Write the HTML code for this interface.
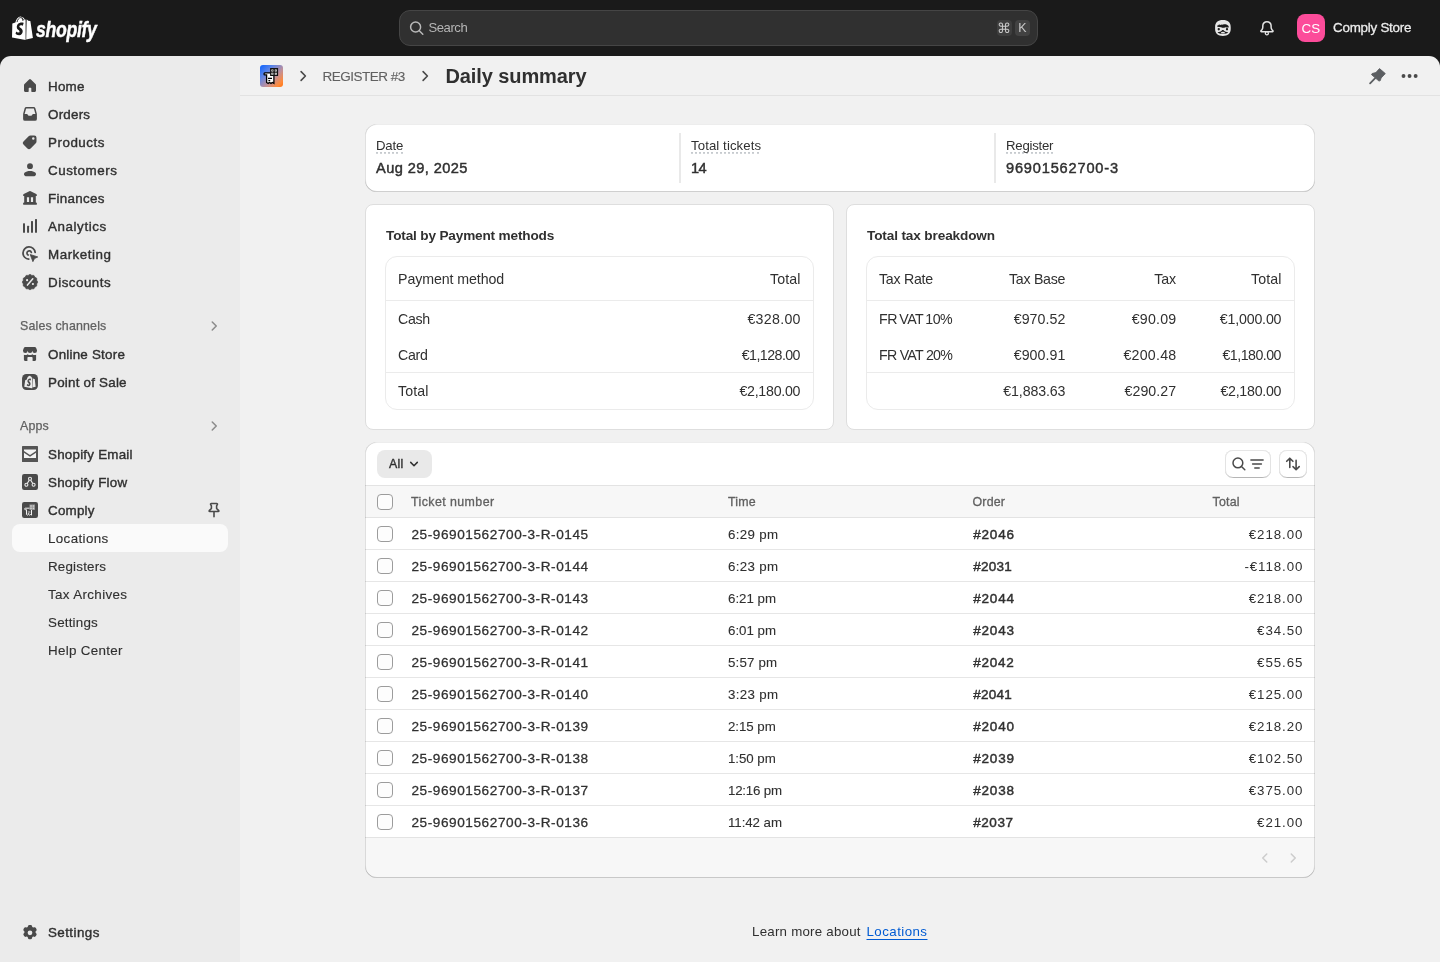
<!DOCTYPE html>
<html lang="en">
<head>
<meta charset="utf-8">
<title>Daily summary · Comply</title>
<style>
*{box-sizing:border-box;margin:0;padding:0}
html,body{width:1440px;height:962px;overflow:hidden}
body{background:#1a1a1a;font-family:"Liberation Sans",Arial,sans-serif;font-size:13px;color:#303030;position:relative;-webkit-font-smoothing:antialiased}
#root{position:absolute;left:0;top:0;width:1440px;height:962px;will-change:transform;background:#1a1a1a}
.abs{position:absolute}
.t{position:absolute;white-space:nowrap;line-height:20px;height:20px}
svg{display:block;position:absolute;overflow:visible}
/* top bar */
#topbar{position:absolute;left:0;top:0;width:1440px;height:56px;background:#1a1a1a}
#search{position:absolute;left:399px;top:10px;width:639.400px;height:36px;border-radius:11px;background:#303030;border:1px solid #454545}
.kbd{position:absolute;top:20px;width:15.400px;height:15.600px;border-radius:4px;background:#424242;color:#c8c8c8;font-size:12.400px;line-height:16px;text-align:center}
#avatar{position:absolute;left:1297px;top:14px;width:28px;height:28px;border-radius:8px;background:#fc4c9a;color:#fff;font-size:13.4px;line-height:29px;text-align:center;letter-spacing:.1px}
/* frame */
#side{position:absolute;left:0;top:56px;width:240px;height:906px;background:#ebebeb;border-top-left-radius:11px}
#main{position:absolute;left:240px;top:56px;width:1200px;height:906px;background:#f1f1f1;border-top-right-radius:11px}
#apphead{position:absolute;left:0;top:0;width:1200px;height:40px;border-bottom:1px solid #e2e2e2}
/* nav */
.nv{margin-top:1px;position:absolute;left:48px;white-space:nowrap;line-height:20px;height:20px;font-size:13.4px;color:#303030;-webkit-text-stroke:.38px #303030;letter-spacing:.22px}
.sub{margin-top:1px;position:absolute;left:48px;white-space:nowrap;line-height:20px;height:20px;font-size:13.4px;color:#303030;letter-spacing:.2px;-webkit-text-stroke:.12px #303030}
.sec{position:absolute;left:20px;white-space:nowrap;line-height:20px;height:20px;font-size:12.400px;color:#616161;letter-spacing:.17px;-webkit-text-stroke:.25px #616161}
.ic{position:absolute;left:20px;width:20px;height:20px}
.ic svg{left:0;top:0;width:20px;height:20px;fill:#4a4a4a}
#sel{position:absolute;left:12px;top:468px;width:216px;height:28px;border-radius:8px;background:#fafafa}
/* cards */
.card{position:absolute;background:#fff;border-radius:12px}
.card::after{content:"";position:absolute;left:0;top:0;right:0;bottom:0;border-radius:12px;pointer-events:none;z-index:5;box-shadow:inset 0 1px 0 0 rgba(0,0,0,.07),inset 1px 0 0 0 rgba(0,0,0,.12),inset -1px 0 0 0 rgba(0,0,0,.12),inset 0 -1px 0 0 rgba(0,0,0,.19)}
.scard{position:absolute;background:#fff;border-radius:8px;border:1px solid #dedede}
.inner{position:absolute;border:1px solid #ebebeb;border-radius:12px;background:#fff}
.hl{position:absolute;height:1px;background:#ebebeb}
.vl{position:absolute;width:1px;background:#e3e3e3}

.lb{position:absolute;white-space:nowrap;line-height:20px;height:20px;font-size:13.2px;color:#303030;letter-spacing:-.05px}
.lb u{text-decoration:none;padding-bottom:1px;background-image:repeating-linear-gradient(90deg,#c6cace 0,#c6cace 2px,transparent 2px,transparent 4.100px);background-size:100% 1.800px;background-repeat:no-repeat;background-position:0 100%}
.vb{position:absolute;white-space:nowrap;line-height:20px;height:20px;font-size:14.6px;color:#303030;-webkit-text-stroke:.45px #303030;letter-spacing:.2px}
.h2{position:absolute;white-space:nowrap;line-height:20px;height:20px;font-size:13.6px;font-weight:bold;color:#303030;letter-spacing:-.1px}
.c{position:absolute;white-space:nowrap;line-height:20px;height:20px;font-size:14.2px;color:#303030;letter-spacing:.12px}
.r{text-align:right}

.btnall{position:absolute;left:12px;top:8px;width:55px;height:28px;border-radius:8px;background:#e9e9e9}
.tbtn{position:absolute;top:8px;height:28px;border-radius:8px;background:#fff;box-shadow:inset 0 1px 0 0 #e6e6e6,inset 1px 0 0 0 #e3e3e3,inset -1px 0 0 0 #e3e3e3,inset 0 -1px 0 0 #b5b5b5}
#thead{position:absolute;left:0;top:43px;width:950px;height:33px;background:#f7f7f7;border-top:1px solid #e3e3e3;border-bottom:1px solid #e3e3e3}
#tfoot{position:absolute;left:0;top:396px;width:950px;height:40px;background:#f7f7f7;border-radius:0 0 12px 12px}
.rl{position:absolute;left:0;width:950px;height:1px;background:#e6e6e6}
.cb{position:absolute;left:12px;width:16px;height:16px;border-radius:4px;border:1px solid #9c9c9c;background:#fdfdfd}
.th{position:absolute;white-space:nowrap;line-height:16px;height:16px;font-size:12.4px;color:#616161;-webkit-text-stroke:.3px #616161;letter-spacing:.2px}
.tk{position:absolute;left:46.400px;white-space:nowrap;line-height:20px;height:20px;font-size:13.600px;color:#303030;-webkit-text-stroke:.28px #303030;letter-spacing:.58px}
.tm{position:absolute;left:363px;white-space:nowrap;line-height:20px;height:20px;font-size:13.3px;color:#303030;letter-spacing:.42px;-webkit-text-stroke:.1px #303030}
.od{position:absolute;left:608.200px;white-space:nowrap;line-height:20px;height:20px;font-size:13.5px;color:#303030;-webkit-text-stroke:.45px #303030;letter-spacing:.76px}
.tt{position:absolute;right:11.700px;text-align:right;white-space:nowrap;line-height:20px;height:20px;font-size:13.3px;color:#303030;letter-spacing:.92px}
</style>
</head>
<body>
<div id="root">
<div id="topbar">
  <svg id="bag" style="left:12px;top:15.5px;width:21px;height:24px" viewBox="0 0 21 24"><path fill="#fff" d="M14.2 23.6 20.9 22.1 18.4 5.2c-.02-.13-.13-.2-.23-.21l-1.9-.14-1.4-1.38c-.06-.06-.14-.08-.22-.08L14.2 23.6ZM13.5 3.5l-.75.23c-.45-1.3-1.24-2.48-2.63-2.48h-.12C9.6.73 9.1.5 8.68.5 5.44.5 3.9 4.55 3.4 6.6l-2.27.7c-.7.22-.72.24-.82.9L0 21.4l13.6 2.5V3.48c-.04 0-.08.01-.1.02Z"/><path fill="#1a1a1a" transform="translate(7.900 12.900) scale(1.320 1.340) translate(-8 -12.800)" d="M10.9 8.3l-.72 2.1s-.63-.33-1.4-.33c-1.13 0-1.18.7-1.18.88 0 .97 2.53 1.34 2.53 3.6 0 1.78-1.13 2.93-2.66 2.93-1.83 0-2.76-1.14-2.76-1.14l.49-1.62s.96.83 1.77.83c.53 0 .75-.42.75-.72 0-1.26-2.08-1.32-2.08-3.4 0-1.75 1.26-3.44 3.79-3.44.98 0 1.46.28 1.46.28Z"/><path fill="none" stroke="#1a1a1a" stroke-width=".9" d="M5 6.1C5.6 3.7 6.9 1.6 8.7 1.6c1.5 0 2.4 1.3 2.9 2.6M9.9 1.9c.9 1.2.9 2.6.9 3"/></svg>
  <div class="t" id="wordmark" style="left:36px;top:14.500px;height:30px;line-height:30px;font-size:21.300px;font-weight:bold;font-style:italic;color:#fff;-webkit-text-stroke:.45px #fff;letter-spacing:-.4px;transform:scaleX(.83);transform-origin:0 50%">shopify</div>
  <div id="search"></div>
  <svg style="left:407px;top:18px;width:20px;height:20px" viewBox="0 0 20 20"><path fill="none" stroke="#b9b9b9" stroke-width="1.5" stroke-linecap="round" d="M13.6 9a5 5 0 1 1-10 0 5 5 0 0 1 10 0ZM12.3 12.7l3.5 3.500"/></svg>
  <div class="t" id="tsearch" style="left:428.4px;top:18px;font-size:13.1px;color:#b5b5b5;letter-spacing:-.42px">Search</div>
  <div class="kbd" style="left:996.800px;font-size:13.500px;line-height:17.400px;background:#3e3e3e">⌘</div>
  <div class="kbd" style="left:1014.700px">K</div>
  <svg id="sidekick" style="left:1213px;top:18px;width:20px;height:20px" viewBox="0 0 20 20"><path fill="#e6e6e6" transform="translate(0 .4) scale(1 .962)" d="M9.900 1.750c5 0 7.800 2.600 7.800 7.150v2.300c0 4.300-3.100 7-7.800 7s-7.800-2.700-7.800-7V8.900c0-4.550 2.800-7.150 7.800-7.150Z"/><path fill="#1a1a1a" d="M4.150 8.700c.150-.900.600-1.750 1.050-2.300l.350 1.150c.300-.550.700-.950 1.150-1.200l.200.950c.500-.550 1.150-.900 1.800-1.100l-.100.800c1.700-1 4.700-1 6.700.700.400.500.550 1.100.450 1.700-1.400.250-2.500.100-3.450-.100-1.100.700-2.900.800-4.150 0-1.300-.300-2.600-.500-4-.600Z"/><circle cx="5.750" cy="11.250" r="1.150" fill="#1a1a1a"/><circle cx="14" cy="11.250" r="1.150" fill="#1a1a1a"/><path fill="#1a1a1a" d="M4.500 14.200c1.800-.250 3.500-.800 4.350-1.750.500-.550 1.500-.550 2 0 .850.950 2.550 1.500 4.350 1.750-.800 1.250-2.700 1.700-5.350 1.700s-4.550-.450-5.350-1.700Z"/><ellipse cx="9.950" cy="14.650" rx="2" ry=".95" fill="#e6e6e6"/></svg>
  <svg id="bell" style="left:1257px;top:18px;width:20px;height:20px" viewBox="0 0 20 20"><circle cx="9.850" cy="15.250" r="1.550" fill="none" stroke="#e3e3e3" stroke-width="1.300"/><path fill="#1a1a1a" stroke="#e3e3e3" stroke-width="1.500" stroke-linejoin="round" d="M9.950 3.650c-2.400 0-4.150 1.850-4.150 4.150v1.500c0 .900-.300 1.700-.900 2.400l-.900 1c-.350.400-.050 1.050.450 1.050h11c.500 0 .800-.650.450-1.050l-.900-1c-.600-.700-.900-1.500-.900-2.400V7.800c0-2.300-1.750-4.150-4.150-4.150Z"/></svg>
  <div id="avatar">CS</div>
  <div class="t" id="tstore" style="left:1333px;top:18px;font-size:13.4px;color:#ececec;-webkit-text-stroke:.28px #ececec;letter-spacing:-.24px">Comply Store</div>
</div>
<div id="side">
  <div id="sel"></div>
  <div class="ic" style="top:20px"><svg viewBox="0 0 20 20"><path d="M9.100 3.450a1.300 1.300 0 0 1 1.800 0l4.600 4.450c.320.310.500.730.500 1.170v5.430c0 .830-.670 1.500-1.500 1.500h-2.550a.650.650 0 0 1-.650-.650v-3a.600.600 0 0 0-.600-.600h-1.400a.600.600 0 0 0-.600.600v3a.650.650 0 0 1-.650.650h-2.550c-.830 0-1.500-.670-1.500-1.500v-5.430c0-.440.180-.860.500-1.170l4.600-4.450Z"/></svg></div><div class="nv" style="top:20px">Home</div>
  <div class="ic" style="top:48px"><svg viewBox="0 0 20 20"><path fill-rule="evenodd" d="M6.450 2.900a1.900 1.900 0 0 0-1.830 1.400l-1.420 5.200c-.070.250-.100.500-.100.760v4.640a1.900 1.900 0 0 0 1.900 1.900h10a1.900 1.900 0 0 0 1.900-1.900v-4.640c0-.260-.030-.510-.100-.760l-1.420-5.200a1.900 1.900 0 0 0-1.830-1.400h-7.100Zm-.380 1.800a.400.400 0 0 1 .380-.300h7.100c.180 0 .340.120.380.300l1.470 5.400h-2.300a.900.900 0 0 0-.750.400l-.480.720a1.300 1.300 0 0 1-1.080.580h-1.580a1.300 1.300 0 0 1-1.080-.580l-.480-.720a.900.900 0 0 0-.750-.400h-2.300l1.470-5.400Z"/></svg></div><div class="nv" style="top:48px">Orders</div>
  <div class="ic" style="top:76px"><svg viewBox="0 0 20 20"><path fill-rule="evenodd" d="M10.400 3.500a2.500 2.500 0 0 0-1.770.730l-5.150 5.150a2.250 2.250 0 0 0 0 3.180l3.960 3.960a2.250 2.250 0 0 0 3.180 0l5.150-5.150a2.500 2.500 0 0 0 .730-1.770v-3.850a2.250 2.250 0 0 0-2.250-2.250h-3.850Zm2.900 4.350a1.250 1.250 0 1 0 0-2.500 1.250 1.250 0 0 0 0 2.500Z"/></svg></div><div class="nv" style="top:76px;letter-spacing:0.52px">Products</div>
  <div class="ic" style="top:104px"><svg viewBox="0 0 20 20"><path d="M10 3.200a2.950 2.950 0 1 0 0 5.900 2.950 2.950 0 0 0 0-5.900Z"/><path d="M10 10.900c-2.300 0-4.100.600-5.200 1.500-.800.650-1 1.700-.600 2.550.400.850 1.250 1.350 2.200 1.350h7.200c.950 0 1.800-.500 2.200-1.350.400-.850.200-1.900-.600-2.550-1.100-.900-2.900-1.500-5.200-1.500Z"/></svg></div><div class="nv" style="top:104px;letter-spacing:0.52px">Customers</div>
  <div class="ic" style="top:132px"><svg viewBox="0 0 20 20"><path fill-rule="evenodd" d="M9.350 3.150a1.400 1.400 0 0 1 1.300 0l5.600 2.950c.400.200.650.620.650 1.070 0 .520-.420.930-.930.930h-.170v6.300h.200c.500 0 .900.400.900.900v.600c0 .500-.400.900-.900.900h-12c-.500 0-.900-.400-.900-.900v-.600c0-.500.400-.900.900-.900h.200v-6.300h-.170a.930.930 0 0 1-.930-.930c0-.450.250-.870.650-1.070l5.600-2.950Zm-2.450 6.050v4.700h2.200v-4.700h-2.200Zm4 0v4.700h2.200v-4.700h-2.200Z"/></svg></div><div class="nv" style="top:132px;letter-spacing:0.31px">Finances</div>
  <div class="ic" style="top:160px"><svg viewBox="0 0 20 20"><rect x="3" y="7.150" width="2" height="9.600" rx=".5"/><rect x="7.050" y="9.800" width="2" height="6.950" rx=".5"/><rect x="11" y="5" width="2" height="11.750" rx=".5"/><rect x="15" y="3" width="2" height="13.750" rx=".5"/></svg></div><div class="nv" style="top:160px;letter-spacing:0.58px">Analytics</div>
  <div class="ic" style="top:188px"><svg viewBox="0 0 20 20"><path fill="none" stroke="#4a4a4a" stroke-width="1.750" stroke-linecap="round" d="M15.150 8.400a6.100 6.100 0 1 0-6.400 6.750"/><path fill="none" stroke="#4a4a4a" stroke-width="1.700" stroke-linecap="round" d="M11.350 8.400a2.250 2.250 0 1 0-3.250 2.650"/><path stroke="#4a4a4a" stroke-width=".8" stroke-linejoin="round" d="M10.200 10.500l7.600 2.450-3.300 1.600-1.600 3.100-2.700-7.150Z"/></svg></div><div class="nv" style="top:188px;letter-spacing:0.52px">Marketing</div>
  <div class="ic" style="top:216px"><svg viewBox="0 0 20 20"><path stroke="#4a4a4a" stroke-width=".7" stroke-linejoin="round" d="M10.00 2.35L11.80 3.39L13.88 3.39L14.91 5.19L16.71 6.22L16.71 8.30L17.75 10.10L16.71 11.90L16.71 13.97L14.91 15.01L13.88 16.81L11.80 16.81L10.00 17.85L8.20 16.81L6.13 16.81L5.09 15.01L3.29 13.98L3.29 11.90L2.25 10.10L3.29 8.30L3.29 6.22L5.09 5.19L6.12 3.39L8.20 3.39Z"/><path stroke="#ebebeb" stroke-width="1.500" stroke-linecap="round" d="M7.450 13.100 12.800 6.800"/><circle cx="7.100" cy="8.200" r="1.100" fill="#ebebeb"/><circle cx="12.900" cy="12" r="1.100" fill="#ebebeb"/></svg></div><div class="nv" style="top:216px;letter-spacing:0.49px">Discounts</div>
  <div class="sec" style="top:260px">Sales channels</div><svg style="left:204px;top:260px;width:20px;height:20px" viewBox="0 0 20 20"><path fill="none" stroke="#8a8a8a" stroke-width="1.500" stroke-linecap="round" stroke-linejoin="round" d="M8.250 6l4 4-4 4"/></svg>
  <div class="ic" style="top:288px"><svg viewBox="0 0 20 20"><path d="M5.300 3h9.400c.650 0 1.230.400 1.460 1l.840 2.150v.500a2.330 2.330 0 0 1-4.660.100 2.330 2.330 0 0 1-4.660 0 2.330 2.330 0 0 1-4.680-.100v-.500l.840-2.150c.230-.600.810-1 1.460-1Z"/><path d="M3.900 10.700c.500.250 1 .350 1.450.350.850 0 1.650-.350 2.300-.900.650.550 1.450.900 2.350.900s1.700-.350 2.350-.900c.650.550 1.450.900 2.300.900.450 0 .950-.100 1.450-.350v4.800c0 .830-.670 1.500-1.500 1.500h-2v-3.100c0-.550-.450-1-1-1h-3.200c-.550 0-1 .450-1 1v3.100h-2c-.830 0-1.500-.670-1.500-1.500v-4.800Z"/></svg></div><div class="nv" style="top:288px">Online Store</div>
  <div class="ic" style="top:316px"><svg viewBox="0 0 20 20"><rect x="2.050" y="2.050" width="15.900" height="15.900" rx="4.400" fill="#4a4a4a"/><g transform="translate(-1.150 -3.150) scale(1.120 1.240)"><path fill="#ebebeb" d="M12.900 14.900 15 14.400l-.800-6.100c0-.100-.100-.150-.200-.150l-.700-.050-.550-.550-.150-.050-.300 7.400h.600ZM12 7.100l-.350.100c-.200-.600-.600-1.200-1.250-1.200h-.050c-.200-.250-.450-.350-.650-.350-1.550 0-2.300 1.950-2.550 2.950l-1.100.350c-.350.100-.350.100-.400.450l-.850 5 6.700 1.250h.550Z"/><path fill="#4a4a4a" transform="translate(9.200 11) scale(1.350 1.400) translate(-9.500 -11.300)" d="M10.800 9.100l-.350 1s-.300-.150-.650-.150c-.550 0-.550.350-.550.400 0 .450 1.200.650 1.200 1.700 0 .850-.550 1.400-1.250 1.400-.900 0-1.300-.550-1.300-.550l.250-.750s.450.400.850.400c.250 0 .350-.200.350-.350 0-.600-1-.650-1-1.600 0-.850.600-1.650 1.800-1.650.450 0 .650.150.650.150Z"/></g></svg></div><div class="nv" style="top:316px">Point of Sale</div>
  <div class="sec" style="top:360px">Apps</div><svg style="left:204px;top:360px;width:20px;height:20px" viewBox="0 0 20 20"><path fill="none" stroke="#8a8a8a" stroke-width="1.500" stroke-linecap="round" stroke-linejoin="round" d="M8.250 6l4 4-4 4"/></svg>
  <div class="ic" style="top:388px"><svg viewBox="0 0 20 20"><rect x="2" y="2" width="16" height="16" rx=".6" fill="#555"/><path fill="#f4f4f4" d="M4 5.600h12v1.500l-6 3.900-6-3.900V5.600Zm0 3.200 6 3.900 6-3.900v5.100h-12V8.800Z"/></svg></div><div class="nv" style="top:388px">Shopify Email</div>
  <div class="ic" style="top:416px"><svg viewBox="0 0 20 20"><rect x="2" y="2" width="16" height="16" rx="2.200" fill="#4a4a4a"/><g fill="none" stroke="#ebebeb" stroke-width="1.100"><circle cx="10" cy="6.800" r="1.500"/><circle cx="6.400" cy="12.800" r="1.500"/><circle cx="13.600" cy="12.800" r="1.500"/><path d="M9.300 8.150 7.200 11.500M10.700 8.150l2.100 3.350"/></g></svg></div><div class="nv" style="top:416px">Shopify Flow</div>
  <div class="ic" style="top:444px"><svg viewBox="0 0 20 20"><rect x="2" y="2" width="16" height="16" rx="2.200" fill="#4a4a4a"/><path fill="#4a4a4a" stroke="#f4f4f4" stroke-width="1" d="M5.300 8.200h6.200v6.900l-1-.6-1 .6-1-.6-1 .6-1-.6V9.700H5.300c-.400 0-.700-.300-.700-.750s.300-.750.700-.750Z"/><path fill="#8a8a8a" d="M9.400 4.400h5.600v5.600h-5.600z"/><path fill="#ebebeb" d="M10.200 5.200h1.600v1.600h-1.600zm2.400 0h1.600v1.600h-1.600zm-2.400 2.400h1.600v1.600h-1.600zm2.400 0h1.600v1.600h-1.600z" opacity=".75"/><path stroke="#ebebeb" stroke-width=".8" d="M7.800 12h2.600M7.800 13.500h1.400"/></svg></div><div class="nv" style="top:444px">Comply</div>
  <svg id="pinout" style="left:204px;top:444px;width:20px;height:20px" viewBox="0 0 20 20"><path transform="translate(-1.300 -.300) scale(1.130 1.050)" fill="none" stroke="#4a4a4a" stroke-width="1.400" stroke-linejoin="round" stroke-linecap="round" d="M7.600 3.600h4.800c.500 0 .800.500.600.900l-.700 1.300v2.600l1.900 2c.300.300.100.900-.400.900h-7.600c-.500 0-.700-.600-.400-.900l1.900-2V5.800l-.700-1.300c-.200-.400.100-.900.600-.900ZM10 11.500v4.700"/></svg>
  <div class="sub" style="top:472px;letter-spacing:0.36px">Locations</div>
  <div class="sub" style="top:500px;letter-spacing:0.18px">Registers</div>
  <div class="sub" style="top:528px;letter-spacing:0.35px">Tax Archives</div>
  <div class="sub" style="top:556px">Settings</div>
  <div class="sub" style="top:584px;letter-spacing:0.29px">Help Center</div>
  <div class="ic" style="top:867px"><svg viewBox="0 0 20 20"><path fill-rule="evenodd" d="M8.010 3.660a1.500 1.500 0 0 1 1.470-1.160h1.040c.700 0 1.310.480 1.470 1.160l.190.810c.320.130.620.310.900.510l.800-.240a1.500 1.500 0 0 1 1.730.690l.520.900a1.500 1.500 0 0 1-.270 1.850l-.600.570a4.700 4.700 0 0 1 0 1.040l.600.570c.510.480.620 1.250.270 1.850l-.520.900a1.500 1.500 0 0 1-1.730.690l-.800-.240c-.280.200-.580.380-.900.510l-.190.810a1.500 1.500 0 0 1-1.470 1.160h-1.040a1.500 1.500 0 0 1-1.470-1.160l-.190-.810a4.600 4.600 0 0 1-.900-.510l-.800.240a1.500 1.500 0 0 1-1.730-.690l-.520-.900a1.500 1.500 0 0 1 .270-1.850l.600-.570a4.700 4.700 0 0 1 0-1.040l-.600-.570a1.500 1.500 0 0 1-.270-1.850l.520-.900a1.500 1.500 0 0 1 1.730-.690l.800.240c.280-.200.580-.380.900-.510l.190-.810ZM10 12.250a2.250 2.250 0 1 0 0-4.500 2.250 2.250 0 0 0 0 4.500Z" transform="translate(-.5 -.7) scale(1.050)"/></svg></div><div class="nv" style="top:866px;letter-spacing:.42px">Settings</div>
</div>
<div id="main">
  <div id="apphead">
    <div id="appicon" class="abs" style="left:20.400px;top:9px;width:22.300px;height:22px;border-radius:3px;background:linear-gradient(135deg,#0a62ff 0%,#5b84e8 30%,#c0909a 60%,#ff8a3a 85%,#ff7410 100%);overflow:hidden">
      <svg style="left:0;top:0;width:22px;height:22px" viewBox="0 0 22 22"><path fill="#fff" stroke="#000" stroke-width="1.300" d="M4.900 7.900h9v10.500l-1.500-.9-1.400.9-1.500-.9-1.400.9-1.500-.9V9.900H4.900c-.5 0-.9-.4-.9-1s.4-1 .9-1Z"/><path fill="#111" d="M10.100 3.100h8v8h-8z"/><path fill="#fff" d="M11.400 4.400h2v2h-2zm3.400 0h2v2h-2zm-3.400 3.400h2v2h-2zm3.400 0h2v2h-2z"/><path fill="#111" d="M12 5h.8v.8H12zm3.400 0h.8v.8h-.8zM12 8.400h.8v.8H12zm3.400 0h.8v.8h-.8z"/><path fill="none" stroke="#000" stroke-width="1.300" d="M8 13.300h4M8.400 15.700h1.800"/></svg>
    </div>
    <svg style="left:52.500px;top:10px;width:20px;height:20px" viewBox="0 0 20 20"><path fill="none" stroke="#4a4a4a" stroke-width="1.600" stroke-linecap="round" stroke-linejoin="round" d="M8.100 5.600 12.400 10l-4.300 4.400"/></svg>
    <div class="t" id="treg" style="left:82.500px;top:11px;font-size:13.500px;color:#616161;letter-spacing:-.5px;-webkit-text-stroke:.1px #616161">REGISTER #3</div>
    <svg style="left:175px;top:10px;width:20px;height:20px" viewBox="0 0 20 20"><path fill="none" stroke="#4a4a4a" stroke-width="1.600" stroke-linecap="round" stroke-linejoin="round" d="M8.100 5.600 12.400 10l-4.300 4.400"/></svg>
    <div class="t" id="ttitle" style="left:205.500px;top:6px;height:28px;line-height:28px;font-size:20px;font-weight:bold;color:#303030;letter-spacing:-.1px">Daily summary</div>
    <svg id="pinf" style="left:1127px;top:10px;width:20px;height:20px" viewBox="0 0 20 20"><path fill="#5c5f62" stroke="#5c5f62" stroke-width=".9" stroke-linejoin="round" d="M12.500 2.600 18.300 7.600 14.100 12 13.300 14.600 12 15.100 4.500 8.600 5.200 7.500 8.900 6.600Z"/><path fill="none" stroke="#5c5f62" stroke-width="1.800" stroke-linecap="round" d="M8.200 12.100 3.100 17.400"/></svg>
    <svg id="dots" style="left:1159px;top:10px;width:20px;height:20px" viewBox="0 0 20 20"><g fill="#4a4a4a"><circle cx="4.500" cy="9.950" r="1.950"/><circle cx="10.550" cy="9.950" r="1.950"/><circle cx="16.650" cy="9.950" r="1.950"/></g></svg>
  </div>
  <!-- summary -->
  <div class="card" id="c1" style="left:125px;top:68px;width:950px;height:68px">
    <div class="vl" style="left:314.100px;top:9px;height:50px;width:1.600px;background:#e9e9e9"></div>
    <div class="vl" style="left:629.100px;top:9px;height:50px;width:1.600px;background:#e9e9e9"></div>
    <div class="lb" style="left:11px;top:12px;letter-spacing:-0.15px"><u>Date</u></div>
    <div class="vb" style="left:11px;top:34px;letter-spacing:0.41px">Aug 29, 2025</div>
    <div class="lb" style="left:326px;top:12px;letter-spacing:0.1px"><u>Total tickets</u></div>
    <div class="vb" style="left:326px;top:34px;letter-spacing:-0.63px">14</div>
    <div class="lb" style="left:641px;top:12px;letter-spacing:-0.23px"><u>Register</u></div>
    <div class="vb" style="left:641px;top:34px;letter-spacing:0.82px">96901562700-3</div>
  </div>
  <!-- payment -->
  <div class="scard" id="c2" style="left:125px;top:148px;width:469px;height:226px">
    <div class="h2" style="left:20px;top:21px;letter-spacing:-0.16px">Total by Payment methods</div>
    <div class="inner" style="left:19px;top:51px;width:429px;height:154px">
      <div class="hl" style="left:0;top:43px;width:427px"></div>
      <div class="hl" style="left:0;top:115px;width:427px"></div>
      <div class="c" style="left:12px;top:12px;letter-spacing:-0.08px">Payment method</div><div class="c r" style="right:12.500px;top:12px;letter-spacing:0.13px;margin-right:-0.13px">Total</div>
      <div class="c" style="left:12px;top:52px;letter-spacing:-0.31px">Cash</div><div class="c r" style="right:12.500px;top:52px;letter-spacing:0.3px;margin-right:-0.30px">€328.00</div>
      <div class="c" style="left:12px;top:88px;letter-spacing:-0.32px">Card</div><div class="c r" style="right:12.500px;top:88px;letter-spacing:-0.55px;margin-right:0.55px">€1,128.00</div>
      <div class="c" style="left:12px;top:124px;letter-spacing:0.13px">Total</div><div class="c r" style="right:12.500px;top:124px;letter-spacing:-0.25px;margin-right:0.25px">€2,180.00</div>
    </div>
  </div>
  <!-- tax -->
  <div class="scard" id="c3" style="left:606px;top:148px;width:469px;height:226px">
    <div class="h2" style="left:20px;top:21px;letter-spacing:-0.13px">Total tax breakdown</div>
    <div class="inner" style="left:19px;top:51px;width:429px;height:154px">
      <div class="hl" style="left:0;top:43px;width:427px"></div>
      <div class="hl" style="left:0;top:115px;width:427px"></div>
      <div class="c" style="left:12px;top:12px;letter-spacing:-0.27px">Tax Rate</div><div class="c r" style="right:228.600px;top:12px;letter-spacing:-0.27px;margin-right:0.27px">Tax Base</div><div class="c r" style="right:117.800px;top:12px;letter-spacing:-0.09px;margin-right:0.09px">Tax</div><div class="c r" style="right:12.500px;top:12px;letter-spacing:0.13px;margin-right:-0.13px">Total</div>
      <div class="c" style="left:12px;top:52px;letter-spacing:-.5px;word-spacing:-1.100px">FR VAT 10%</div><div class="c r" style="right:228.600px;top:52px;letter-spacing:0.07px;margin-right:-0.07px">€970.52</div><div class="c r" style="right:117.800px;top:52px;letter-spacing:0.2px;margin-right:-0.20px">€90.09</div><div class="c r" style="right:12.500px;top:52px;letter-spacing:-0.17px;margin-right:0.17px">€1,000.00</div>
      <div class="c" style="left:12px;top:88px;letter-spacing:-0.73px">FR VAT 20%</div><div class="c r" style="right:228.600px;top:88px;letter-spacing:0.07px;margin-right:-0.07px">€900.91</div><div class="c r" style="right:117.800px;top:88px;letter-spacing:0.25px;margin-right:-0.25px">€200.48</div><div class="c r" style="right:12.500px;top:88px;letter-spacing:-0.51px;margin-right:0.51px">€1,180.00</div>
      <div class="c r" style="right:228.600px;top:124px;letter-spacing:-0.13px;margin-right:0.13px">€1,883.63</div><div class="c r" style="right:117.800px;top:124px;letter-spacing:0.07px;margin-right:-0.07px">€290.27</div><div class="c r" style="right:12.500px;top:124px;letter-spacing:-0.25px;margin-right:0.25px">€2,180.00</div>
    </div>
  </div>
  <!-- table -->
  <div class="card" id="c4" style="left:125px;top:386px;width:950px;height:436px">
    <div class="btnall"></div>
    <div class="th" id="tall" style="left:24px;top:14px;color:#303030;-webkit-text-stroke:.35px #303030">All</div>
    <svg style="left:39px;top:12px;width:20px;height:20px" viewBox="0 0 20 20"><path fill="none" stroke="#303030" stroke-width="1.500" stroke-linecap="round" stroke-linejoin="round" d="M6.700 8.400 10 11.700l3.300-3.300"/></svg>
    <div class="tbtn" style="left:860px;width:46px"></div>
    <svg style="left:863px;top:12px;width:20px;height:20px" viewBox="0 0 20 20"><path fill="none" stroke="#4a4a4a" stroke-width="1.500" stroke-linecap="round" d="M14.800 8.900a4.900 4.900 0 1 1-9.800 0 4.900 4.900 0 0 1 9.800 0ZM13.500 12.500l3.300 3.200"/></svg>
    <svg style="left:882px;top:12px;width:20px;height:20px" viewBox="0 0 20 20"><path fill="none" stroke="#4a4a4a" stroke-width="1.500" stroke-linecap="round" d="M3.900 5.900h12.200M5.600 10h8.800M7.800 13.900h4.400"/></svg>
    <div class="tbtn" style="left:914px;width:28px"></div>
    <svg style="left:918px;top:12px;width:20px;height:20px" viewBox="0 0 20 20"><path fill="none" stroke="#4a4a4a" stroke-width="1.600" stroke-linecap="round" stroke-linejoin="round" d="M6.800 13.400V4.300M3.700 7.300l3.100-3.100 3.100 3.100M13.100 6.400v9.200M10 12.600l3.100 3.100 3.100-3.100"/></svg>
    <div id="thead"></div>
    <div class="cb" style="top:52px"></div>
    <div class="th" style="left:46px;top:52px;letter-spacing:.42px">Ticket number</div>
    <div class="th" style="left:363px;top:52px">Time</div>
    <div class="th" style="left:607.500px;top:52px">Order</div>
    <div class="th" style="left:847.500px;top:52px">Total</div>
    <div class="cb" style="top:84px"></div><div class="tk" style="top:83px">25-96901562700-3-R-0145</div><div class="tm" style="top:83px;letter-spacing:0.34px">6:29 pm</div><div class="od" style="top:83px;letter-spacing:0.81px">#2046</div><div class="tt" style="top:83px">€218.00</div>
    <div class="rl" style="top:107px"></div>
    <div class="cb" style="top:116px"></div><div class="tk" style="top:115px">25-96901562700-3-R-0144</div><div class="tm" style="top:115px;letter-spacing:0.34px">6:23 pm</div><div class="od" style="top:115px;letter-spacing:0.23px">#2031</div><div class="tt" style="top:115px">-€118.00</div>
    <div class="rl" style="top:139px"></div>
    <div class="cb" style="top:148px"></div><div class="tk" style="top:147px">25-96901562700-3-R-0143</div><div class="tm" style="top:147px;letter-spacing:0.01px">6:21 pm</div><div class="od" style="top:147px;letter-spacing:0.81px">#2044</div><div class="tt" style="top:147px">€218.00</div>
    <div class="rl" style="top:171px"></div>
    <div class="cb" style="top:180px"></div><div class="tk" style="top:179px">25-96901562700-3-R-0142</div><div class="tm" style="top:179px;letter-spacing:0.01px">6:01 pm</div><div class="od" style="top:179px;letter-spacing:0.81px">#2043</div><div class="tt" style="top:179px">€34.50</div>
    <div class="rl" style="top:203px"></div>
    <div class="cb" style="top:212px"></div><div class="tk" style="top:211px">25-96901562700-3-R-0141</div><div class="tm" style="top:211px;letter-spacing:0.17px">5:57 pm</div><div class="od" style="top:211px;letter-spacing:0.73px">#2042</div><div class="tt" style="top:211px">€55.65</div>
    <div class="rl" style="top:235px"></div>
    <div class="cb" style="top:244px"></div><div class="tk" style="top:243px">25-96901562700-3-R-0140</div><div class="tm" style="top:243px;letter-spacing:0.34px">3:23 pm</div><div class="od" style="top:243px;letter-spacing:0.23px">#2041</div><div class="tt" style="top:243px">€125.00</div>
    <div class="rl" style="top:267px"></div>
    <div class="cb" style="top:276px"></div><div class="tk" style="top:275px">25-96901562700-3-R-0139</div><div class="tm" style="top:275px;letter-spacing:-0.04px">2:15 pm</div><div class="od" style="top:275px;letter-spacing:0.81px">#2040</div><div class="tt" style="top:275px">€218.20</div>
    <div class="rl" style="top:299px"></div>
    <div class="cb" style="top:308px"></div><div class="tk" style="top:307px">25-96901562700-3-R-0138</div><div class="tm" style="top:307px;letter-spacing:-0.04px">1:50 pm</div><div class="od" style="top:307px;letter-spacing:0.81px">#2039</div><div class="tt" style="top:307px">€102.50</div>
    <div class="rl" style="top:331px"></div>
    <div class="cb" style="top:340px"></div><div class="tk" style="top:339px">25-96901562700-3-R-0137</div><div class="tm" style="top:339px;letter-spacing:-0.21px">12:16 pm</div><div class="od" style="top:339px;letter-spacing:0.81px">#2038</div><div class="tt" style="top:339px">€375.00</div>
    <div class="rl" style="top:363px"></div>
    <div class="cb" style="top:372px"></div><div class="tk" style="top:371px">25-96901562700-3-R-0136</div><div class="tm" style="top:371px;letter-spacing:-0.07px">11:42 am</div><div class="od" style="top:371px;letter-spacing:0.56px">#2037</div><div class="tt" style="top:371px">€21.00</div>
    <div class="rl" style="top:395px;background:#e3e3e3"></div>
    <div id="tfoot"></div>
    <svg style="left:890px;top:406px;width:20px;height:20px" viewBox="0 0 20 20"><path fill="none" stroke="#cccccc" stroke-width="1.500" stroke-linecap="round" stroke-linejoin="round" d="M11.750 6 7.750 10l4 4"/></svg>
    <svg style="left:918px;top:406px;width:20px;height:20px" viewBox="0 0 20 20"><path fill="none" stroke="#cccccc" stroke-width="1.500" stroke-linecap="round" stroke-linejoin="round" d="M8.250 6l4 4-4 4"/></svg>
  </div>
  <div class="t" id="learn" style="left:512px;top:866px;font-size:13.3px;color:#303030;letter-spacing:.24px">Learn more about</div>
  <div class="t" id="llink" style="left:626.500px;top:866px;font-size:13.3px;color:#005bd3;letter-spacing:.45px;text-decoration:underline;text-underline-offset:2.500px">Locations</div>
</div>
</div>
</body>
</html>
